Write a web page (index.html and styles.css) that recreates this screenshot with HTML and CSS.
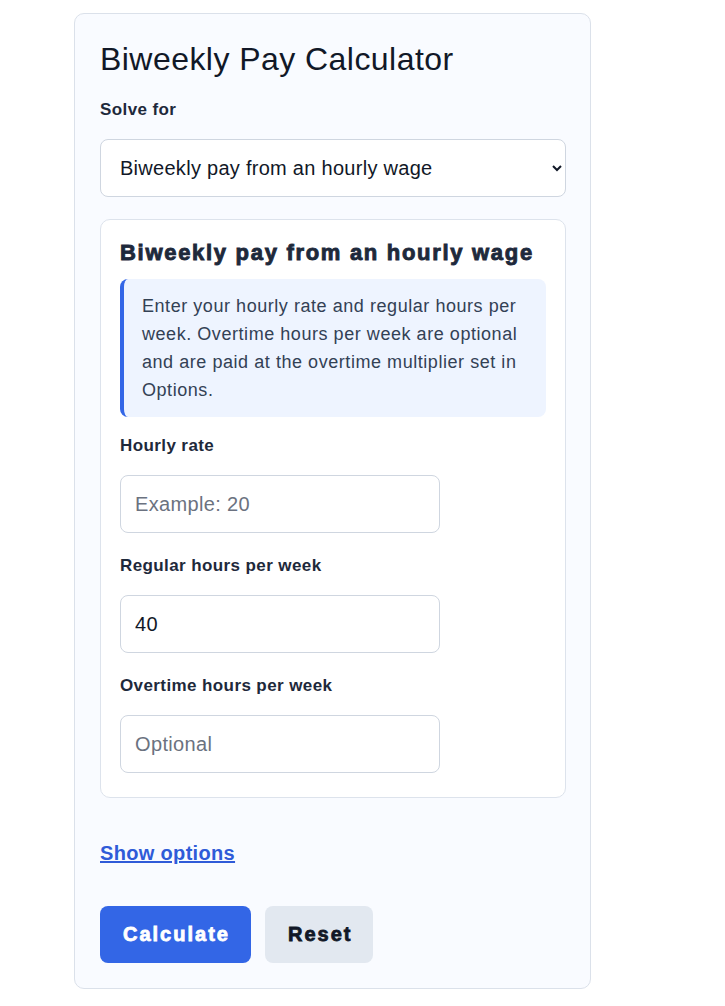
FILE: index.html
```html
<!DOCTYPE html>
<html lang="en">
<head>
<meta charset="utf-8">
<title>Biweekly Pay Calculator</title>
<link rel="stylesheet" href="styles.css">
</head>
<body>
<div class="page">
  <section class="card">
    <h1 class="title">Biweekly Pay Calculator</h1>
    <label class="label" for="solve">Solve for</label>
    <select id="solve" class="select">
      <option>Biweekly pay from an hourly wage</option>
      <option>Biweekly pay from an annual salary</option>
    </select>

    <div class="panel">
      <h2 class="panel-title">Biweekly pay from an hourly wage</h2>
      <p class="note">Enter your hourly rate and regular hours per week. Overtime hours per week are optional and are paid at the overtime multiplier set in Options.</p>

      <div class="field">
        <label class="label" for="rate">Hourly rate</label>
        <input id="rate" class="input" type="text" placeholder="Example: 20">
      </div>
      <div class="field">
        <label class="label" for="hours">Regular hours per week</label>
        <input id="hours" class="input" type="text" value="40">
      </div>
      <div class="field">
        <label class="label" for="ot">Overtime hours per week</label>
        <input id="ot" class="input" type="text" placeholder="Optional">
      </div>
    </div>

    <a class="options-link" href="#">Show options</a>

    <div class="actions">
      <button class="btn btn-primary" type="button">Calculate</button>
      <button class="btn btn-secondary" type="button">Reset</button>
    </div>
  </section>
</div>
</body>
</html>
```

FILE: styles.css
```css
* { box-sizing: border-box; }

html, body {
  margin: 0;
  padding: 0;
  background: #ffffff;
  font-family: "Liberation Sans", Arial, sans-serif;
  color: #1e293b;
}

.page {
  padding: 13px 0 0 74px;
}

.card {
  width: 517px;
  background: #f9fbff;
  border: 1px solid #dbe1ea;
  border-radius: 10px;
  padding: 27px 25px 25px 25px;
}

.title {
  margin: 0 0 22px 0;
  font-size: 32px;
  font-weight: 400;
  line-height: 37px;
  letter-spacing: 0.45px;
  color: #111827;
}

.label {
  display: block;
  font-size: 17px;
  font-weight: 700;
  line-height: 19px;
  letter-spacing: 0.4px;
  margin: 0 0 20px 0;
  color: #1e293b;
}

.select {
  display: block;
  width: 466px;
  height: 58px;
  font-family: "Liberation Sans", Arial, sans-serif;
  font-size: 20px;
  letter-spacing: 0.28px;
  color: #111827;
  background: #ffffff;
  border: 1px solid #cfd6e0;
  border-radius: 8px;
  padding: 0 10px 0 15px;
  margin: 0;
}

.panel {
  margin-top: 22px;
  width: 466px;
  background: #ffffff;
  border: 1px solid #dde3ec;
  border-radius: 10px;
  padding: 20px 19px 24px 19px;
}

.panel-title {
  margin: 0 0 14px 0;
  font-size: 22px;
  font-weight: 700;
  line-height: 25px;
  letter-spacing: 1.7px;
  -webkit-text-stroke: 0.9px #1e293b;
  color: #1e293b;
}

.note {
  margin: 0;
  background: #eef4ff;
  border-left: 4px solid #3366e6;
  border-radius: 8px;
  padding: 13px 18px 13px 18px;
  font-size: 18px;
  line-height: 28px;
  letter-spacing: 0.55px;
  color: #334155;
}

.field {
  margin-top: 23px;
}

.note + .field {
  margin-top: 19px;
}

.input {
  display: block;
  width: 320px;
  height: 58px;
  font-family: "Liberation Sans", Arial, sans-serif;
  font-size: 20px;
  letter-spacing: 0.35px;
  color: #111827;
  background: #ffffff;
  border: 1px solid #cfd6e0;
  border-radius: 8px;
  padding: 0 14px;
  margin: 0;
}

.input::placeholder {
  color: #6b7280;
}

.options-link {
  display: inline-block;
  margin-top: 44px;
  font-size: 20px;
  font-weight: 700;
  line-height: 23px;
  letter-spacing: 0.33px;
  color: #2f5bd8;
  text-decoration: underline;
}

.actions {
  display: flex;
  gap: 14px;
  margin-top: 41px;
}

.btn {
  height: 57px;
  border: none;
  border-radius: 8px;
  font-family: "Liberation Sans", Arial, sans-serif;
  font-size: 20px;
  font-weight: 700;
  letter-spacing: 2px;
  padding: 0 21px 0 23px;
  cursor: pointer;
}

.btn-primary {
  background: #3366e6;
  color: #ffffff;
  -webkit-text-stroke: 0.8px #ffffff;
}

.btn-secondary {
  background: #e2e8f0;
  color: #111827;
  -webkit-text-stroke: 0.8px #111827;
}
```
